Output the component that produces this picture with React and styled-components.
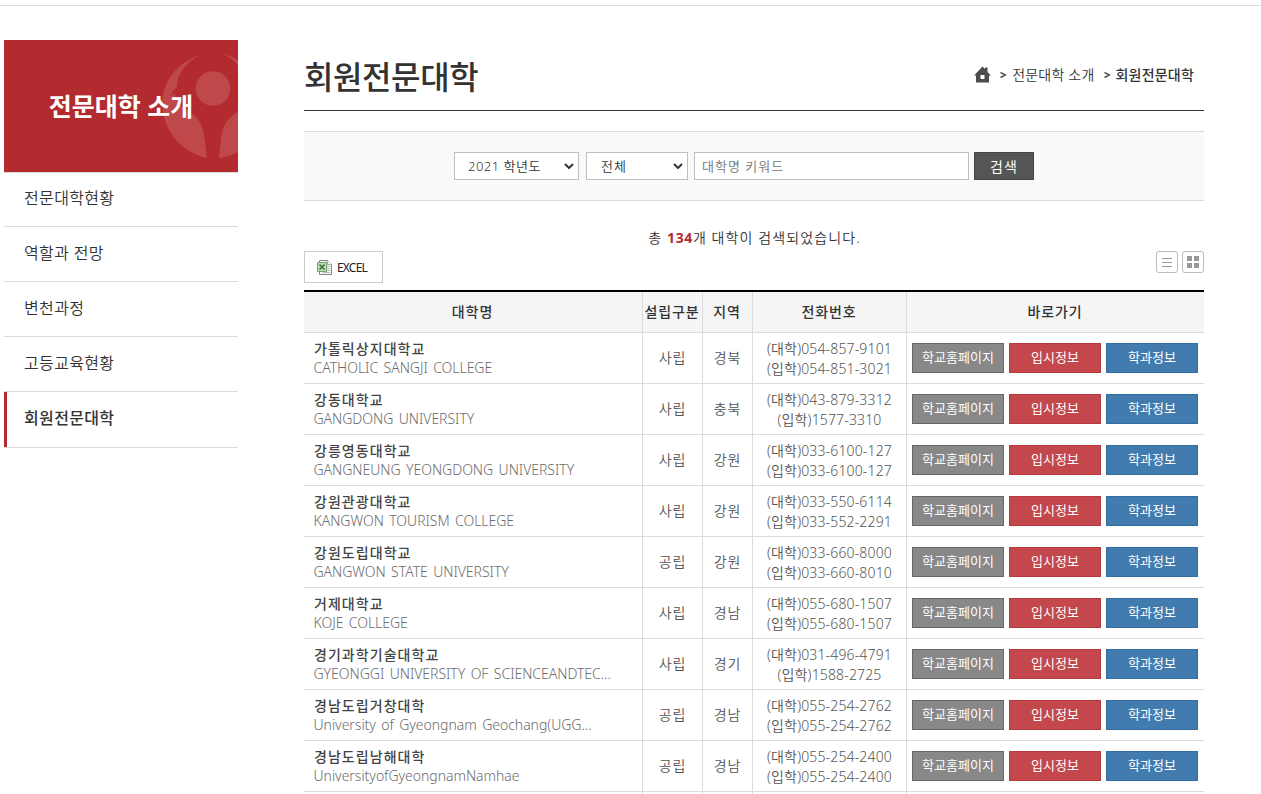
import React from 'react';
import styled, { createGlobalStyle } from 'styled-components';

const GlobalStyle = createGlobalStyle`
  * {
    box-sizing: border-box;
  }

  body {
    margin: 0;
    background: #fff;
    color: #333;
    font-family: 'Noto Sans', 'Noto Sans CJK KR', sans-serif;
    font-size: 14px;
    overflow: hidden;
  }

  ul, ol, h1, h2, p {
    margin: 0;
    padding: 0;
    list-style: none;
  }

  button, input {
    font-family: inherit;
    border-radius: 0;
    outline: 0;
    padding: 0;
  }
`;

const Page = styled.div`
  height: 794px;
  overflow: hidden;
  padding-top: 5px;
`;

const Container = styled.div`
  display: flex;
  gap: 66px;
  padding: 34px 0 0 4px;
  border-top: 1px solid #dbdbdb;
`;

const Sidebar = styled.aside`
  width: 234px;
  flex: none;
`;

const SideHeader = styled.div`
  position: relative;
  display: flex;
  align-items: center;
  justify-content: center;
  height: 132px;
  background: #b32b2f;
  overflow: hidden;
`;

const Emblem = styled.svg`
  position: absolute;
  top: 0;
  left: 0;
`;

const SideTitle = styled.h2`
  position: relative;
  color: #fff;
  font-size: 25px;
  font-weight: 700;
  line-height: 36px;
`;

const SideMenu = styled.ul`
  border-top: 1px solid #dbdbdb;
`;

const SideItem = styled.li`
  display: flex;
  align-items: center;
  height: ${(props) => (props.$active ? 56 : 55)}px;
  padding: 0 0 5px ${(props) => (props.$active ? 17 : 20)}px;
  border-bottom: 1px solid #dbdbdb;
  box-shadow: ${(props) => (props.$active ? 'inset 3px 0 #b32b2f' : 'none')};
  padding-left: 20px;
  font-size: 16px;
  font-weight: ${(props) => (props.$active ? 500 : 350)};
  letter-spacing: 0.35px;

  &:first-child {
    height: 54px;
  }
`;

const Main = styled.main`
  width: 900px;
  flex: none;
`;

const TitleBar = styled.header`
  display: flex;
  align-items: center;
  justify-content: space-between;
  height: 71px;
  border-bottom: 1px solid #333;
`;

const Title = styled.h1`
  padding-top: 3px;
  font-size: 32px;
  font-weight: 500;
  line-height: 44px;
  letter-spacing: -0.4px;
`;

const Breadcrumb = styled.ol`
  display: flex;
  align-items: center;
  padding: 0 10px 3px 0;
  font-size: 14px;
`;

const HomeItem = styled.li`
  display: flex;
  padding-top: 1px;
`;

const Crumb = styled.li`
  font-weight: ${(props) => (props.$current ? 500 : 350)};
  letter-spacing: 0.2px;
`;

const Arrow = styled.svg`
  margin: 2px 5px 0 ${(props) => props.$left}px;
`;

const SearchBox = styled.form`
  display: flex;
  justify-content: center;
  margin-top: 20px;
  padding: 20px 20px 20px 0;
  height: 70px;
  border: solid #dbdbdb;
  border-width: 1px 0;
  background: #f9f9f9;
`;

const SelectBox = styled.div`
  display: flex;
  align-items: center;
  justify-content: space-between;
  width: ${(props) => props.$width}px;
  height: 28px;
  margin-right: ${(props) => props.$gap}px;
  padding: 0 4px 1px ${(props) => props.$indent}px;
  border: 1px solid #bfbfbf;
  background: #fff;
  font-size: 13px;
  font-weight: 350;
  letter-spacing: ${(props) => props.$spacing}px;
`;

const Keyword = styled.input`
  width: 275px;
  height: 28px;
  margin-right: 5px;
  padding-left: 7px;
  border: 1px solid #bfbfbf;
  font-size: 13px;
  font-weight: 350;
  letter-spacing: 1px;

  &::placeholder {
    color: #757575;
    opacity: 1;
  }
`;

const SearchButton = styled.button`
  width: 60px;
  height: 28px;
  padding-bottom: 1px;
  border: 1px solid #444;
  background: #555;
  color: #fff;
  font-size: 14px;
  letter-spacing: 1px;
`;

const Summary = styled.p`
  margin-top: 26px;
  height: 23px;
  line-height: 22px;
  text-align: center;
  font-weight: 350;
  letter-spacing: 1.1px;
  padding-left: 1px;

  strong {
    color: #b32b2f;
    font-weight: 700;
    letter-spacing: 0.6px;
  }
`;

const Toolbar = styled.div`
  display: flex;
  justify-content: space-between;
  height: 40px;
  padding-top: 1px;
`;

const ExcelButton = styled.button`
  display: flex;
  align-items: center;
  gap: 5px;
  width: 79px;
  height: 32px;
  padding-left: 12px;
  border: 1px solid #ccc;
  background: #fff;
  color: #222;
  font-size: 12px;
  letter-spacing: -0.8px;
`;

const ViewSwitch = styled.div`
  display: flex;
  gap: 4px;
`;

const ViewButton = styled.button`
  display: flex;
  align-items: center;
  justify-content: center;
  width: 22px;
  height: 22px;
  border: 1px solid #bbb;
  border-radius: 3px;
  background: #fff;
`;

const Table = styled.div`
  border-top: 2px solid #000;
`;

const Row = styled.div`
  display: grid;
  grid-template-columns: 338px 60px 50px 154px 298px;
  height: ${(props) => (props.$head ? 41 : 51)}px;
  border-bottom: 1px solid #dbdbdb;
  background: ${(props) => (props.$head ? '#f5f5f5' : '#fff')};
`;

const Cell = styled.div`
  display: flex;
  flex-direction: column;
  align-items: center;
  justify-content: center;
  border-left: 1px solid #dbdbdb;
  color: #555;
  font-weight: 350;
  letter-spacing: 0.9px;
  line-height: 20px;
  white-space: nowrap;
`;

const HeadCell = styled(Cell)`
  padding-right: 1px;
  color: #333;
  font-weight: 500;

  &:first-child {
    border-left: 0;
  }
`;

const NameCell = styled(Cell)`
  align-items: flex-start;
  padding: 0 0 0 10px;
  border-left: 0;
  line-height: 19px;
`;

const KoreanName = styled.span`
  color: #444;
  font-weight: 500;
  letter-spacing: 1.05px;
`;

const EnglishName = styled.span`
  color: #6c6c6c;
  letter-spacing: -0.03px;
  word-spacing: 1.8px;
  margin-left: -0.5px;
`;

const PhoneCell = styled(Cell)`
  padding-top: 2px;
`;

const Phone = styled.span`
  letter-spacing: 0.15px;
`;

const LinkCell = styled(Cell)`
  flex-direction: row;
  justify-content: flex-start;
  gap: 5px;
  padding-left: 5px;
`;

const LINK_COLORS = {
  gray: ['#888', '#666'],
  red: ['#c4474c', '#b5393e'],
  blue: ['#427cae', '#336c9e'],
};

const LinkButton = styled.button`
  width: 92px;
  height: 30px;
  padding-bottom: 2px;
  border: 1px solid ${(props) => LINK_COLORS[props.$color][1]};
  background: ${(props) => LINK_COLORS[props.$color][0]};
  color: #fff;
  font-size: 13px;
  line-height: 20px;
`;

const menu = ['전문대학현황', '역할과 전망', '변천과정', '고등교육현황', '회원전문대학'];

const colleges = [
  ['가톨릭상지대학교', 'CATHOLIC SANGJI COLLEGE', '사립', '경북', '054-857-9101', '054-851-3021'],
  ['강동대학교', 'GANGDONG UNIVERSITY', '사립', '충북', '043-879-3312', '1577-3310'],
  ['강릉영동대학교', 'GANGNEUNG YEONGDONG UNIVERSITY', '사립', '강원', '033-6100-127', '033-6100-127'],
  ['강원관광대학교', 'KANGWON TOURISM COLLEGE', '사립', '강원', '033-550-6114', '033-552-2291'],
  ['강원도립대학교', 'GANGWON STATE UNIVERSITY', '공립', '강원', '033-660-8000', '033-660-8010'],
  ['거제대학교', 'KOJE COLLEGE', '사립', '경남', '055-680-1507', '055-680-1507'],
  ['경기과학기술대학교', 'GYEONGGI UNIVERSITY OF SCIENCEANDTEC...', '사립', '경기', '031-496-4791', '1588-2725'],
  ['경남도립거창대학', 'University of Gyeongnam Geochang(UGG...', '공립', '경남', '055-254-2762', '055-254-2762'],
  ['경남도립남해대학', 'UniversityofGyeongnamNamhae', '공립', '경남', '055-254-2400', '055-254-2400'],
];

function Chevron() {
  return (
    <svg width="10" height="6" viewBox="0 0 10 6" fill="none" stroke="#333" strokeWidth="2">
      <path d="M1 1l4 4 4-4" />
    </svg>
  );
}

function CrumbArrow() {
  return (
    <Arrow $left={9} width="7" height="8" viewBox="0 0 7 8" fill="none" stroke="#555" strokeWidth="1.5">
      <path d="M.5 1.500l5 2.500-5 2.500" />
    </Arrow>
  );
}

function HomeIcon() {
  return (
    <svg width="17" height="17" viewBox="0 0 17 17">
      <path fill="#4d4d4d" fillRule="evenodd" d="M0 9.500L8.500.5l2.500 2.500V1.500h2.500V6L17 9.500h-2V16.500H2V9.500zM6.500 9v4h4V9z" />
    </svg>
  );
}

function ExcelIcon() {
  return (
    <svg width="15" height="15" viewBox="0 0 15 15">
      <path d="M2.500.5h8l4 4v10h-12z" fill="#f4f4f4" stroke="#888" />
      <path d="M10.500.5v4h4" fill="#fff" stroke="#aaa" />
      <path d="M10 6.500h3M10 8.500h3M10 10.500h3M6 12.500h7" stroke="#bbb" />
      <path d="M.5 2.500h9v9h-9z" fill="#c3dbb9" stroke="#74a568" />
      <path d="M2.500 4.500l5 5M7.500 4.500l-5 5" stroke="#3c7440" strokeWidth="1.600" />
    </svg>
  );
}

export default function App() {
  return (
    <Page>
      <GlobalStyle />
      <Container>
        <Sidebar>
          <SideHeader>
            <Emblem width="234" height="132" fill="#bf484b">
              <circle cx="209" cy="48.500" r="17.300" />
              <path d="M200 14C176 20 160 38 158 62C158 90 178 113 203 118L200.500 98C199 84 193 77 187 73C176 66 171 62 171 53L167 56C168 52 171 49 173 47C173 32 186 18 200 14z" />
              <path d="M215 118L217.300 97C218.500 85 225 77 234 71.500V112C228 115 221 117.500 215 118z" />
              <path d="M218.500 14C224 15 229 17.500 234 20.500V25.500C230 20 225 16.500 218.500 14z" />
            </Emblem>
            <SideTitle>전문대학 소개</SideTitle>
          </SideHeader>
          <SideMenu>
            {menu.map((label) => (
              <SideItem key={label} $active={label === '회원전문대학'}>{label}</SideItem>
            ))}
          </SideMenu>
        </Sidebar>
        <Main>
          <TitleBar>
            <Title>회원전문대학</Title>
            <Breadcrumb>
              <HomeItem><HomeIcon /></HomeItem>
              <CrumbArrow />
              <Crumb>전문대학 소개</Crumb>
              <CrumbArrow />
              <Crumb $current>회원전문대학</Crumb>
            </Breadcrumb>
          </TitleBar>
          <SearchBox>
            <SelectBox $width={125} $gap={7} $indent={13} $spacing={0.5}>2021 학년도<Chevron /></SelectBox>
            <SelectBox $width={102} $gap={6} $indent={14} $spacing={1}>전체<Chevron /></SelectBox>
            <Keyword placeholder="대학명 키워드" />
            <SearchButton type="button">검색</SearchButton>
          </SearchBox>
          <Summary>총 <strong>134</strong>개 대학이 검색되었습니다.</Summary>
          <Toolbar>
            <ExcelButton><ExcelIcon />EXCEL</ExcelButton>
            <ViewSwitch>
              <ViewButton>
                <svg width="10" height="9" stroke="#999"><path d="M0 .5h10M0 4.500h10M0 8.500h10" /></svg>
              </ViewButton>
              <ViewButton>
                <svg width="12" height="12" fill="#999"><path d="M0 0h5v5H0zM7 0h5v5H7zM0 7h5v5H0zM7 7h5v5H7z" /></svg>
              </ViewButton>
            </ViewSwitch>
          </Toolbar>
          <Table>
            <Row $head>
              {['대학명', '설립구분', '지역', '전화번호', '바로가기'].map((label) => (
                <HeadCell key={label}>{label}</HeadCell>
              ))}
            </Row>
            {colleges.map(([name, english, type, region, office, admission]) => (
              <Row key={name}>
                <NameCell>
                  <KoreanName>{name}</KoreanName>
                  <EnglishName>{english}</EnglishName>
                </NameCell>
                <Cell>{type}</Cell>
                <Cell>{region}</Cell>
                <PhoneCell>
                  <Phone>(대학){office}</Phone>
                  <Phone>(입학){admission}</Phone>
                </PhoneCell>
                <LinkCell>
                  <LinkButton $color="gray">학교홈페이지</LinkButton>
                  <LinkButton $color="red">입시정보</LinkButton>
                  <LinkButton $color="blue">학과정보</LinkButton>
                </LinkCell>
              </Row>
            ))}
            <Row>
              <NameCell />
              <Cell />
              <Cell />
              <Cell />
              <Cell />
            </Row>
          </Table>
        </Main>
      </Container>
    </Page>
  );
}
